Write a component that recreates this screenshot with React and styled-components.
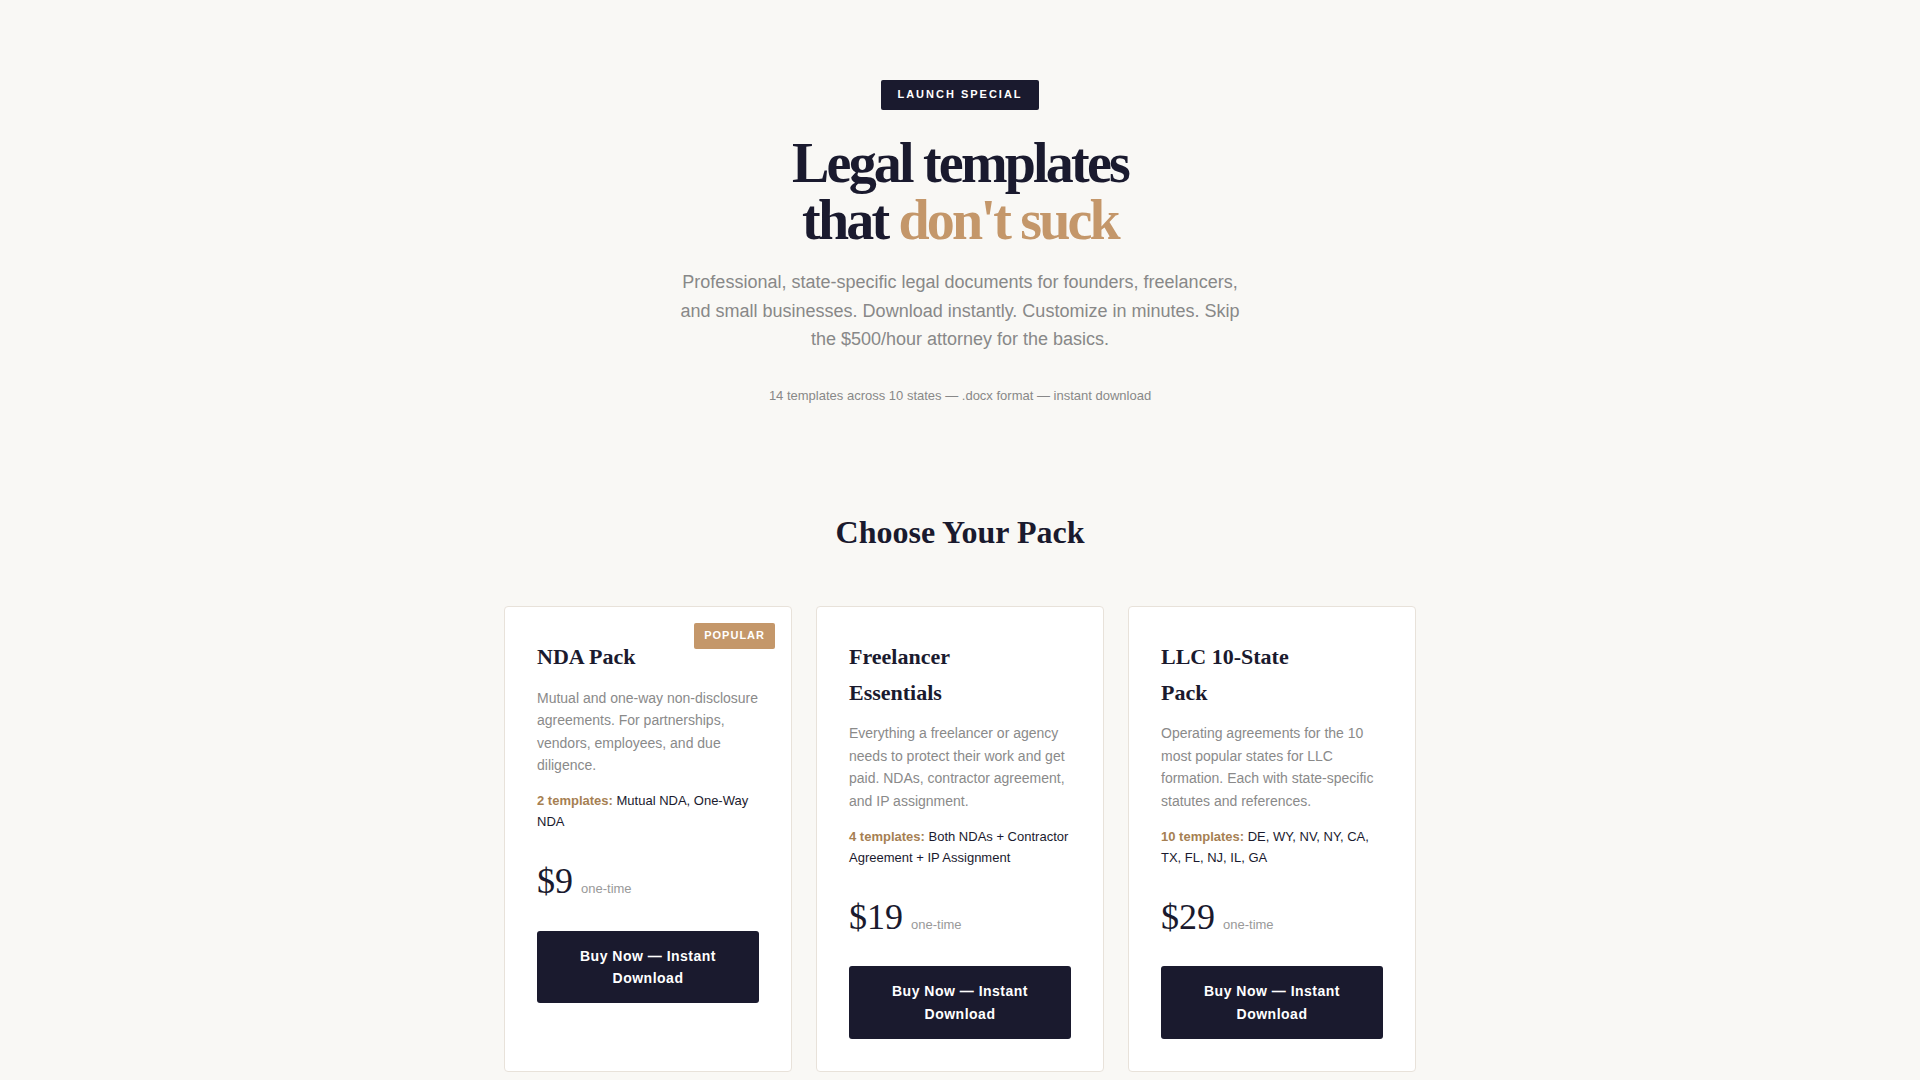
import React from "react";
import styled, { createGlobalStyle } from "styled-components";

const Global = createGlobalStyle`
  * { box-sizing: border-box; }
  html, body { margin: 0; padding: 0; }
  body {
    background: #f9f8f5;
    color: #1a1a2e;
    font-family: "Liberation Sans", Arial, Helvetica, sans-serif;
    line-height: 1.6;
  }
`;

const Page = styled.main`
  min-height: 100vh;
`;

const Hero = styled.section`
  display: flex;
  flex-direction: column;
  align-items: center;
  text-align: center;
  padding: 80px 24px 0;
`;

const Badge = styled.span`
  display: inline-block;
  background: #1a1a2e;
  color: #ffffff;
  font-size: 11px;
  font-weight: 700;
  letter-spacing: 2px;
  text-transform: uppercase;
  padding: 6px 16px;
  border-radius: 2px;
  margin-bottom: 25px;
`;

const Title = styled.h1`
  margin: 0 0 19px;
  font-family: "Liberation Serif", "Times New Roman", serif;
  font-size: 56px;
  font-weight: 700;
  line-height: 1.02;
  letter-spacing: -2.8px;
  color: #1a1a2e;
`;

const Accent = styled.span`
  color: #c4976a;
`;

const Lead = styled.p`
  margin: 0;
  max-width: 570px;
  font-size: 18px;
  line-height: 1.6;
  color: #888888;
`;

const Meta = styled.p`
  margin: 32px 0 0;
  font-size: 13px;
  color: #888888;
`;

const Pricing = styled.section`
  max-width: 960px;
  margin: 0 auto;
  padding: 100px 24px 48px;
`;

const SectionTitle = styled.h2`
  margin: 0 0 48px;
  text-align: center;
  font-family: "Liberation Serif", "Times New Roman", serif;
  font-size: 32px;
  font-weight: 700;
  color: #1a1a2e;
`;

const Grid = styled.div`
  display: grid;
  grid-template-columns: repeat(3, 1fr);
  gap: 24px;
`;

const Card = styled.article`
  position: relative;
  background: #ffffff;
  border: 1px solid #e8e2da;
  border-radius: 4px;
  padding: 32px;
`;

const Ribbon = styled.span`
  position: absolute;
  top: 16px;
  right: 16px;
  background: #c4976a;
  color: #ffffff;
  font-size: 11px;
  font-weight: 700;
  letter-spacing: 1px;
  padding: 4px 10px;
  border-radius: 2px;
`;

const CardTitle = styled.h3`
  margin: 0 0 12px;
  padding-right: 80px;
  font-family: "Liberation Serif", "Times New Roman", serif;
  font-size: 22px;
  font-weight: 700;
  line-height: 1.62;
  color: #1a1a2e;
`;

const Desc = styled.p`
  margin: 0 0 15px;
  font-size: 14px;
  color: #8a8a8a;
`;

const Includes = styled.p`
  margin: 0;
  font-size: 13px;
  color: #1a1a2e;
`;

const Count = styled.strong`
  color: #a67f52;
  font-weight: 700;
`;

const Price = styled.div`
  margin: 20px 0;
  font-family: "Liberation Serif", "Times New Roman", serif;
  font-size: 36px;
  color: #1a1a2e;
`;

const Per = styled.span`
  margin-left: 8px;
  font-family: "Liberation Sans", Arial, sans-serif;
  font-size: 13px;
  color: #999999;
`;

const BuyButton = styled.button`
  display: block;
  width: 100%;
  border: none;
  border-radius: 3px;
  background: #1a1a2e;
  color: #ffffff;
  font-family: "Liberation Sans", Arial, sans-serif;
  font-size: 14px;
  font-weight: 700;
  letter-spacing: 0.5px;
  line-height: 1.6;
  padding: 14px 24px;
  cursor: pointer;
`;

const packs = [
  {
    name: "NDA Pack",
    popular: true,
    desc: "Mutual and one-way non-disclosure agreements. For partnerships, vendors, employees, and due diligence.",
    count: "2 templates:",
    items: "Mutual NDA, One-Way NDA",
    price: "$9",
  },
  {
    name: "Freelancer Essentials",
    desc: "Everything a freelancer or agency needs to protect their work and get paid. NDAs, contractor agreement, and IP assignment.",
    count: "4 templates:",
    items: "Both NDAs + Contractor Agreement + IP Assignment",
    price: "$19",
  },
  {
    name: "LLC 10-State Pack",
    desc: "Operating agreements for the 10 most popular states for LLC formation. Each with state-specific statutes and references.",
    count: "10 templates:",
    items: "DE, WY, NV, NY, CA, TX, FL, NJ, IL, GA",
    price: "$29",
  },
];

export default function App() {
  return (
    <Page>
      <Global />
      <Hero>
        <Badge>Launch Special</Badge>
        <Title>
          Legal templates
          <br />
          that <Accent>don't suck</Accent>
        </Title>
        <Lead>
          Professional, state-specific legal documents for founders, freelancers, and small
          businesses. Download instantly. Customize in minutes. Skip the $500/hour attorney for
          the basics.
        </Lead>
        <Meta>14 templates across 10 states — .docx format — instant download</Meta>
      </Hero>
      <Pricing>
        <SectionTitle>Choose Your Pack</SectionTitle>
        <Grid>
          {packs.map((p) => (
            <Card key={p.name}>
              {p.popular && <Ribbon>POPULAR</Ribbon>}
              <CardTitle>{p.name}</CardTitle>
              <Desc>{p.desc}</Desc>
              <Includes>
                <Count>{p.count}</Count> {p.items}
              </Includes>
              <Price>
                {p.price}
                <Per>one-time</Per>
              </Price>
              <BuyButton>Buy Now — Instant Download</BuyButton>
            </Card>
          ))}
        </Grid>
      </Pricing>
    </Page>
  );
}
